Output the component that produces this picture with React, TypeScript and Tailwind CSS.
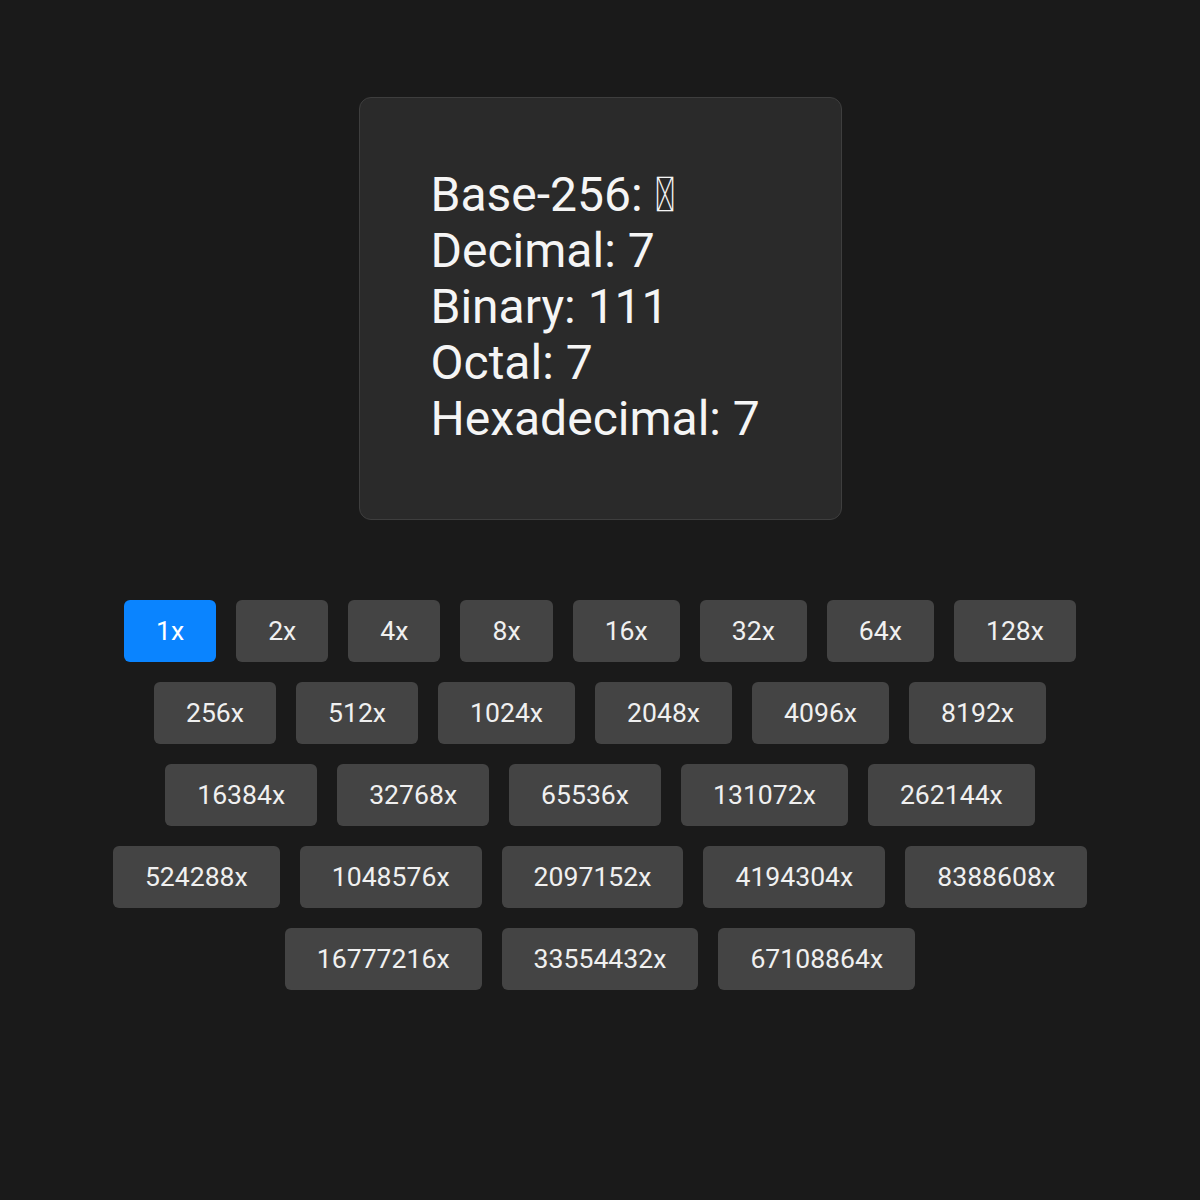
import { useState } from "react";

const multipliers = Array.from({ length: 27 }, (_, i) => 2 ** i);

// no installed font has a glyph for this, so it shows the missing-glyph box like the original
const MISSING = "\uE000";

export default function App() {
  const [active, setActive] = useState(1);
  const value = 7;

  return (
    <div
      className="min-h-[1200px] bg-[#1a1a1a] text-[#f5f5f5] flex flex-col items-center pt-[97px]"
      style={{ fontFamily: "Roboto, 'Noto Sans', sans-serif" }}
    >
      {/* readout card */}
      <div className="w-[483px] h-[423px] rounded-[12px] border border-[#3e3e3e] bg-[#2a2a2a] pl-[71px] pt-[69px]">
        <div className="text-[48px] leading-[56px]">
          <p>Base-256: {value < 32 ? MISSING : String.fromCharCode(value)}</p>
          <p>Decimal: {value.toString(10)}</p>
          <p>Binary: {value.toString(2)}</p>
          <p>Octal: {value.toString(8)}</p>
          <p>Hexadecimal: {value.toString(16).toUpperCase()}</p>
        </div>
      </div>

      {/* multiplier buttons */}
      <div className="w-[1000px] mt-[80px] flex flex-wrap justify-center gap-[20px]">
        {multipliers.map((m) => (
          <button
            key={m}
            onClick={() => setActive(m)}
            className={`px-[32px] py-[15px] rounded-[6px] text-[26.6px] leading-[32px] ${
              active === m ? "bg-[#0a84ff] text-white" : "bg-[#444444] text-[#f0f0f0]"
            }`}
          >
            {m}x
          </button>
        ))}
      </div>
    </div>
  );
}
